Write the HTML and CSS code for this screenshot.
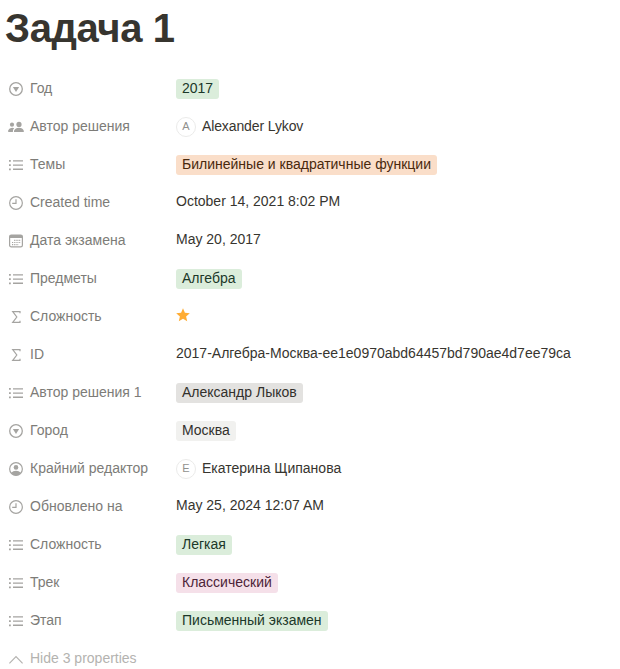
FILE: index.html
```html
<!DOCTYPE html>
<html lang="ru">
<head>
<meta charset="utf-8">
<title>Задача 1</title>
<link rel="stylesheet" href="styles.css">
</head>
<body>
<svg class="sprite" aria-hidden="true">
  <symbol id="select" viewBox="0 0 14 14"><circle cx="7" cy="7" r="6.3" fill="none" stroke="currentColor" stroke-width="1.3"/><path d="M3.9 5h6.2L7 9.9z" fill="currentColor"/></symbol>
  <symbol id="list" viewBox="0 0 14 14"><path d="M0 2h1.8v1.8H0zM0 6.2h1.8V8H0zM0 10.4h1.8v1.8H0zM4 2.2h10v1.4H4zM4 6.4h10v1.4H4zM4 10.6h10V12H4z" fill="currentColor"/></symbol>
  <symbol id="people" viewBox="0 0 16 14"><g fill="currentColor"><circle cx="4" cy="4.7" r="2.1"/><circle cx="11" cy="4.4" r="2.6"/><path d="M.2 12v-1.8Q1.2 7.7 4.2 7.7q1.2 0 2 .5Q4.9 9.4 4.9 11v1zM6 12v-1.3Q7.3 7.8 11 7.8t4.8 2.9V12z"/></g></symbol>
  <symbol id="clock" viewBox="0 0 14 14"><circle cx="7" cy="7" r="6.35" fill="none" stroke="currentColor" stroke-width="1.2"/><path d="M7 3.2v4.2H3.2" fill="none" stroke="currentColor" stroke-width="1.2"/></symbol>
  <symbol id="date" viewBox="0 0 14 14"><rect x=".6" y="1.1" width="12.8" height="11.8" rx="1.7" fill="none" stroke="currentColor" stroke-width="1.2"/><path d="M.5 4V2.7Q.5 1 2 1h10q1.5 0 1.5 1.7V4z" fill="currentColor"/><path d="M5.2 6.4H12M3 8.5h9M3 10.6h6.8" fill="none" stroke="currentColor" stroke-width="1.1" stroke-dasharray="1.2 1"/></symbol>
  <symbol id="sigma" viewBox="0 0 14 14"><path d="M11 3.3V1.6H3.7L7.8 7l-4.1 5.4H11v-1.7" fill="none" stroke="currentColor" stroke-width="1.2"/></symbol>
  <symbol id="person" viewBox="0 0 14 14"><circle cx="7" cy="7" r="6.35" fill="none" stroke="currentColor" stroke-width="1.2"/><circle cx="7" cy="5.4" r="2.3" fill="currentColor"/><path d="M2.2 10.7Q4 8.8 7 8.8t4.8 1.9Q10 13.5 7 13.5t-4.8-2.8z" fill="currentColor"/></symbol>
  <symbol id="chevron" viewBox="0 0 14 14"><path d="M.4 11.4L7 4.7l6.6 6.7" fill="none" stroke="currentColor" stroke-width="1.2"/></symbol>
</svg>
<main class="page">
<h1 class="title">Задача 1</h1>
<div class="properties">
  <div class="row"><div class="label"><svg class="icon"><use href="#select"/></svg><span>Год</span></div><div class="value"><span class="tag green">2017</span></div></div>
  <div class="row"><div class="label"><svg class="icon wide"><use href="#people"/></svg><span>Автор решения</span></div><div class="value"><span class="avatar">A</span><span class="latin">Alexander Lykov</span></div></div>
  <div class="row"><div class="label"><svg class="icon"><use href="#list"/></svg><span>Темы</span></div><div class="value"><span class="tag orange">Билинейные и квадратичные функции</span></div></div>
  <div class="row"><div class="label"><svg class="icon"><use href="#clock"/></svg><span>Created time</span></div><div class="value plain">October 14, 2021 8:02 PM</div></div>
  <div class="row"><div class="label"><svg class="icon"><use href="#date"/></svg><span>Дата экзамена</span></div><div class="value plain">May 20, 2017</div></div>
  <div class="row"><div class="label"><svg class="icon"><use href="#list"/></svg><span>Предметы</span></div><div class="value"><span class="tag green">Алгебра</span></div></div>
  <div class="row"><div class="label"><svg class="icon"><use href="#sigma"/></svg><span>Сложность</span></div><div class="value"><svg class="star" viewBox="0 0 14 14"><path d="M7 .3l1.9 4.5 4.9.4-3.7 3.2 1.1 4.9L7 10.8l-4.2 2.5 1.1-4.9L.2 5.2l4.9-.4z" fill="#ffac33"/></svg></div></div>
  <div class="row"><div class="label"><svg class="icon"><use href="#sigma"/></svg><span>ID</span></div><div class="value plain">2017-Алгебра-Москва-ee1e0970abd64457bd790ae4d7ee79ca</div></div>
  <div class="row"><div class="label"><svg class="icon"><use href="#list"/></svg><span>Автор решения 1</span></div><div class="value"><span class="tag gray">Александр Лыков</span></div></div>
  <div class="row"><div class="label"><svg class="icon"><use href="#select"/></svg><span>Город</span></div><div class="value"><span class="tag light">Москва</span></div></div>
  <div class="row"><div class="label"><svg class="icon"><use href="#person"/></svg><span>Крайний редактор</span></div><div class="value"><span class="avatar">E</span><span>Екатерина Щипанова</span></div></div>
  <div class="row"><div class="label"><svg class="icon"><use href="#clock"/></svg><span>Обновлено на</span></div><div class="value plain">May 25, 2024 12:07 AM</div></div>
  <div class="row"><div class="label"><svg class="icon"><use href="#list"/></svg><span>Сложность</span></div><div class="value"><span class="tag green">Легкая</span></div></div>
  <div class="row"><div class="label"><svg class="icon"><use href="#list"/></svg><span>Трек</span></div><div class="value"><span class="tag pink">Классический</span></div></div>
  <div class="row"><div class="label"><svg class="icon"><use href="#list"/></svg><span>Этап</span></div><div class="value"><span class="tag green">Письменный экзамен</span></div></div>
  <div class="row"><div class="label toggle"><svg class="icon"><use href="#chevron"/></svg><span>Hide 3 properties</span></div></div>
</div>
</main>
</body>
</html>
```
FILE: styles.css
```css
* { box-sizing: border-box; }
body {
  margin: 0;
  overflow: hidden;
  background: #fff;
  color: #37352f;
  font: 14px/20px "Nimbus Sans", "Nimbus Sans L", "Liberation Sans", Arial, sans-serif;
}
.sprite { display: none; }
.page { height: 669px; overflow: hidden; padding: 4px 5px 0; }
.title { margin: 0; height: 66px; font-size: 40px; line-height: 48px; font-weight: 700; letter-spacing: -0.4px; }
.row { display: flex; height: 38px; align-items: center; white-space: nowrap; }
.label { display: flex; align-items: center; width: 171px; padding-left: 4px; color: #7d7c78; }
.label span { padding-bottom: 2px; }
.icon { width: 14px; height: 14px; margin-right: 7px; color: #a5a4a1; flex: none; }
.icon.wide { width: 16px; margin: 0 6px 0 -1px; }
.toggle, .toggle .icon { color: #b4b3b0; }
.value { display: flex; align-items: center; }
.plain { padding-bottom: 4px; }
.tag { height: 20px; padding: 0 6px; border-radius: 3px; line-height: 18px; }
.green { background: #dbeddb; color: #1c3829; }
.orange { background: #fadec9; color: #49290e; }
.gray { background: #e3e2e0; color: #32302c; }
.light { background: #f1f1ef; color: #32302c; }
.pink { background: #f5e0e9; color: #4c2337; }
.avatar {
  width: 20px;
  height: 20px;
  margin-right: 6px;
  border: 1px solid #ebebea;
  border-radius: 50%;
  color: #91918e;
  font-size: 11px;
  line-height: 17px;
  text-align: center;
}
.avatar + span { padding-bottom: 2px; }
.latin { letter-spacing: -0.12px; }
.star { width: 14px; height: 14px; margin-bottom: 4px; }
```
